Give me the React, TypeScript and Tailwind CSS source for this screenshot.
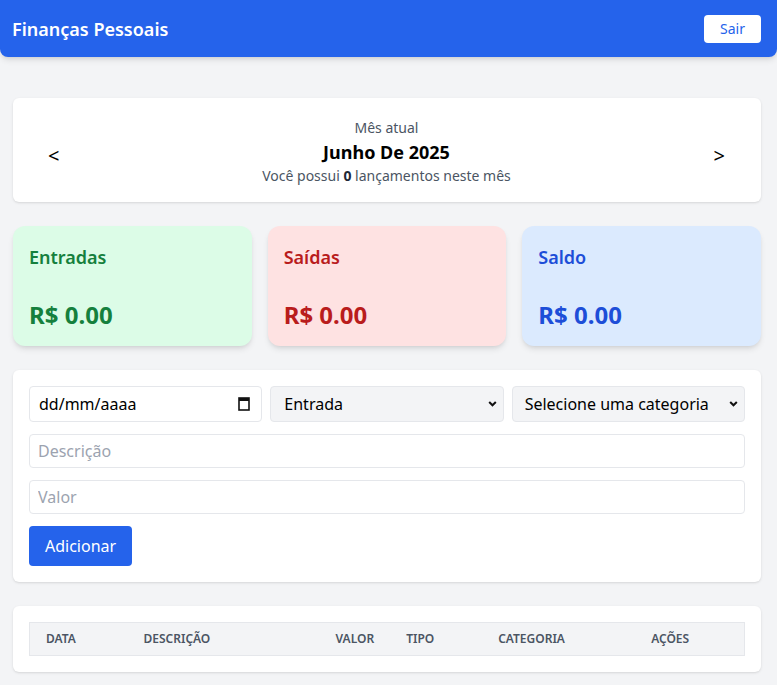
import React from "react"

function Calendar() {
  return (
    <svg width="12" height="14" viewBox="0 0 12 14" className="shrink-0">
      <rect x="1" y="1" width="10" height="12" fill="none" stroke="#111" strokeWidth="1.6" />
      <rect x="1" y="1" width="10" height="3" fill="#111" />
    </svg>
  )
}

function Chevron() {
  return (
    <svg width="9" height="7" viewBox="0 0 9 7" className="pointer-events-none absolute right-[7px] top-1/2 -translate-y-1/2">
      <path d="M1.2 1.5 L4.5 4.8 L7.8 1.5" fill="none" stroke="#111" strokeWidth="2" />
    </svg>
  )
}

function SummaryCard({ title, bg, color }: { title: string; bg: string; color: string }) {
  return (
    <div className={`${bg} rounded-xl shadow-md pt-[17px] px-4 pb-[15px] h-[120px] flex flex-col`}>
      <h3 className={`${color} text-lg font-semibold`}>{title}</h3>
      <div className={`${color} text-2xl font-bold mt-auto`}>R$ 0.00</div>
    </div>
  )
}

export default function App() {
  const cols = [
    { label: "Data", w: "w-[98px]" },
    { label: "Descrição", w: "w-[192px]" },
    { label: "Valor", w: "w-[70px]" },
    { label: "Tipo", w: "w-[92px]" },
    { label: "Categoria", w: "w-[153px]" },
    { label: "Ações", w: "" },
  ]

  return (
    <div className="min-h-[685px] bg-[#f3f4f6] font-['Noto_Sans',sans-serif] text-gray-900">
      <header className="h-[57px] bg-[#2563eb] rounded-b-lg shadow-md flex items-center justify-between pl-3 pr-4">
        <h1 className="text-white text-lg font-semibold">Finanças Pessoais</h1>
        <button className="bg-white text-[#2563eb] text-sm px-4 py-1 rounded">Sair</button>
      </header>

      <main className="pl-[13px] pr-4 pt-[41px] pb-[13px] flex flex-col gap-6">
        {/* mês */}
        <div className="bg-white rounded-md shadow flex items-center justify-between pl-[35px] pr-[36px] pt-5 pb-4">
          <button className="text-xl text-black pt-2">&lt;</button>
          <div className="text-center">
            <p className="text-sm text-[#4b5563]">Mês atual</p>
            <p className="text-lg font-bold text-black">Junho De 2025</p>
            <p className="text-sm text-[#4b5563]">
              Você possui <span className="font-bold text-[#1f2937]">0</span> lançamentos neste mês
            </p>
          </div>
          <button className="text-xl text-black pt-2">&gt;</button>
        </div>

        {/* resumo */}
        <div className="grid grid-cols-3 gap-4">
          <SummaryCard title="Entradas" bg="bg-[#dcfce7]" color="text-[#15803d]" />
          <SummaryCard title="Saídas" bg="bg-[#fee2e2]" color="text-[#b91c1c]" />
          <SummaryCard title="Saldo" bg="bg-[#dbeafe]" color="text-[#1d4ed8]" />
        </div>

        {/* formulário */}
        <div className="bg-white rounded-md shadow p-4 flex flex-col gap-3">
          <div className="grid grid-cols-3 gap-2">
            <div className="h-9 border border-[#e5e7eb] rounded flex items-center justify-between pl-[9px] pr-[11px] bg-white">
              <span className="text-base text-black">dd/mm/aaaa</span>
              <Calendar />
            </div>
            <div className="relative">
              <select className="appearance-none w-full h-9 border border-[#e5e7eb] rounded bg-[#f3f4f6] pl-[13px] pr-6 text-base text-black">
                <option>Entrada</option>
                <option>Saída</option>
              </select>
              <Chevron />
            </div>
            <div className="relative">
              <select className="appearance-none w-full h-9 border border-[#e5e7eb] rounded bg-[#f3f4f6] pl-3 pr-6 text-base text-black">
                <option>Selecione uma categoria</option>
              </select>
              <Chevron />
            </div>
          </div>
          <input
            placeholder="Descrição"
            className="w-full border border-[#e5e7eb] rounded px-2 py-1 text-base placeholder:text-[#9ca3af]"
          />
          <input
            placeholder="Valor"
            className="w-full border border-[#e5e7eb] rounded px-2 py-1 text-base placeholder:text-[#9ca3af]"
          />
          <div>
            <button className="bg-[#2563eb] text-white rounded px-4 py-2 text-base">Adicionar</button>
          </div>
        </div>

        {/* tabela */}
        <div className="bg-white rounded-md shadow p-4">
          <table className="w-full border border-[#e5e7eb] border-collapse">
            <thead className="bg-[#f3f4f6]">
              <tr>
                {cols.map((c) => (
                  <th
                    key={c.label}
                    className={`${c.w} px-4 py-2 text-left text-xs font-semibold uppercase text-[#4b5563]`}
                  >
                    {c.label}
                  </th>
                ))}
              </tr>
            </thead>
            <tbody></tbody>
          </table>
        </div>
      </main>
    </div>
  )
}
